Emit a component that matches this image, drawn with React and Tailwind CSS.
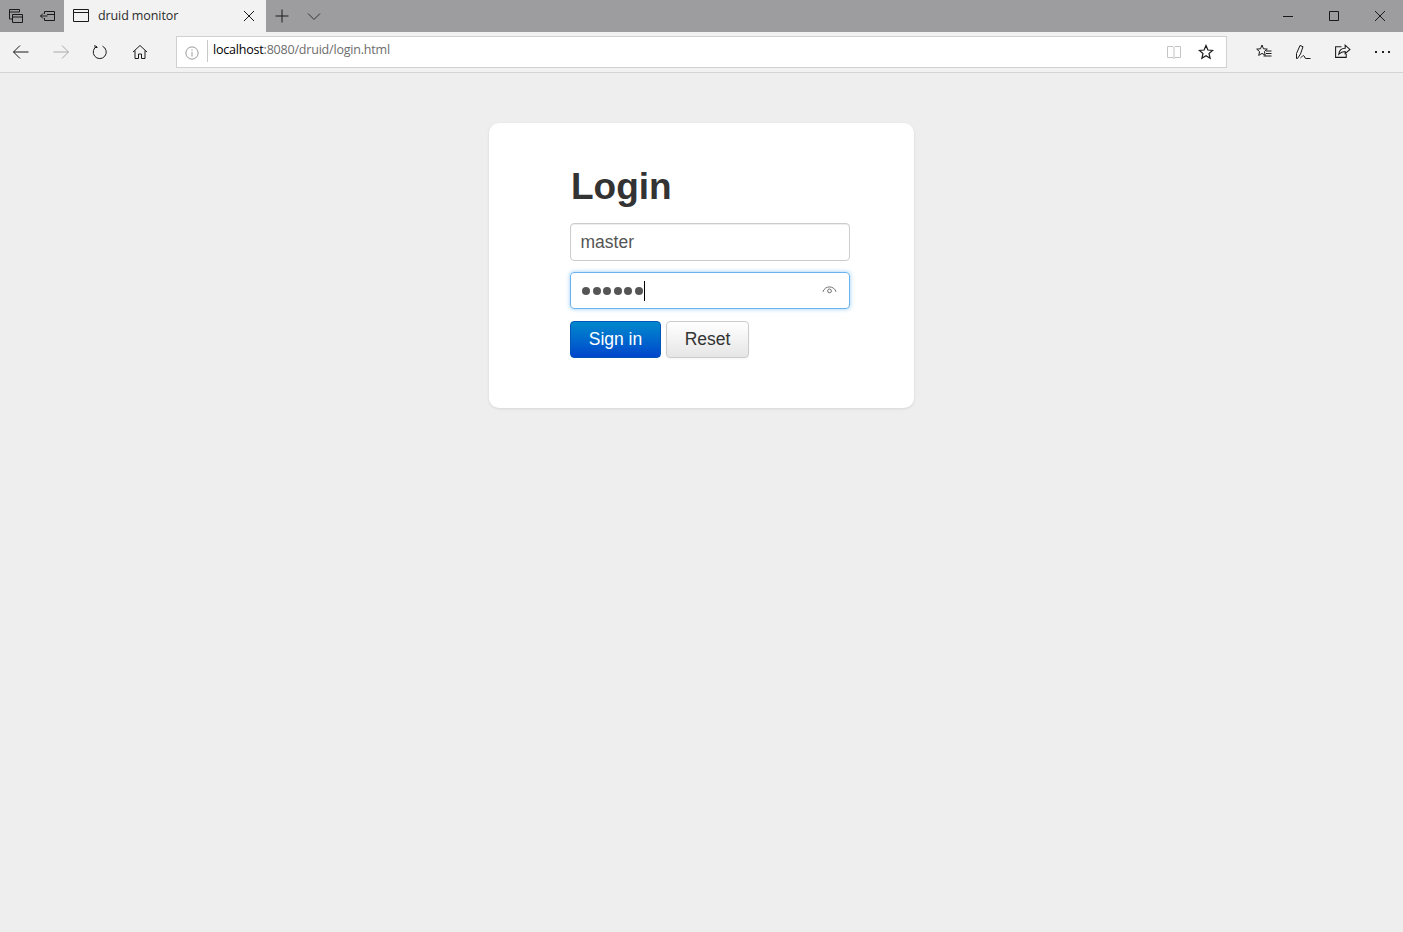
import React from 'react';

const Icon = ({ className = '', size = 16, children, stroke = '#1a1a1a' }) => (
  <svg width={size} height={size} viewBox="0 0 16 16" fill="none" stroke={stroke} strokeWidth="1" className={className}>
    {children}
  </svg>
);

function TitleBar() {
  return (
    <div className="flex h-8 items-stretch bg-[#9d9d9f]">
      <div className="flex w-8 items-center justify-center">
        <Icon>
          <path d="M1.500 1.500h10v2.500h-10zM1.500 4v7h2.500M4.500 6.500h10v8h-10zM4.500 9h10" />
        </Icon>
      </div>
      <div className="flex w-8 items-center justify-center">
        <Icon>
          <path d="M4.500 3.500h10v9h-10v-2.500M4.500 6V3.500M.5 8h7M3 5.500L.5 8 3 10.500M7 6.500h7.500" />
        </Icon>
      </div>
      <div className="flex w-[202px] items-center bg-[#f2f2f2] px-[9px]">
        <Icon>
          <path d="M.5 1.500h15v12h-15zM.5 4.500h15" />
        </Icon>
        <span className="ml-[9px] flex-1 text-[12.5px] tracking-[-0.1px] text-[#2b2b2b] font-['Open_Sans',sans-serif]">druid monitor</span>
        <Icon>
          <path d="M3 3l10 10M13 3L3 13" />
        </Icon>
      </div>
      <div className="flex w-8 items-center justify-center">
        <Icon>
          <path d="M8 1.500v13M1.500 8h13" />
        </Icon>
      </div>
      <div className="flex w-8 items-center justify-center">
        <Icon stroke="#333">
          <path d="M2 5.500l6 6 6-6" />
        </Icon>
      </div>
      <div className="flex-1" />
      <div className="flex w-[46px] items-center justify-center">
        <Icon><path d="M3 8.500h10" /></Icon>
      </div>
      <div className="flex w-[46px] items-center justify-center">
        <Icon><path d="M3.500 3.500h9v9h-9z" /></Icon>
      </div>
      <div className="flex w-[46px] items-center justify-center">
        <Icon><path d="M3 3l10 10M13 3L3 13" /></Icon>
      </div>
    </div>
  );
}

function ToolBar() {
  return (
    <div className="flex h-[41px] items-center border-b border-[#d4d4d4] bg-[#f2f2f2] pb-px">
      <div className="flex w-10 items-center justify-center pl-px">
        <Icon>
          <path d="M.5 8h15M7 1.500L.5 8 7 14.500" />
        </Icon>
      </div>
      <div className="flex w-10 items-center justify-center pl-px">
        <Icon stroke="#a8a8a8">
          <path d="M15.500 8H.5M9 1.500L15.500 8 9 14.500" />
        </Icon>
      </div>
      <div className="flex w-10 items-center justify-center">
        <Icon>
          <path d="M5 2.200A6.500 6.500 0 1 0 10.500 2.200M3 1v2.500h2.500" />
        </Icon>
      </div>
      <div className="flex w-10 items-center justify-center">
        <Icon>
          <path d="M1 8L8 1.500 15 8M3 6.500v8h3.500V10h3v4.500H13v-8" />
        </Icon>
      </div>
      <div className="ml-4 flex h-8 w-[1051px] items-center border border-[#d0d0d0] bg-white">
        <div className="flex w-[30px] items-center justify-center pt-[2px]">
          <Icon size={14} stroke="#8a8a8a">
            <circle cx="8" cy="8" r="7" />
            <path d="M8 7v5M8 4v1.500" />
          </Icon>
        </div>
        <div className="mt-[3px] h-[22px] w-px self-start bg-[#c8c8c8]" />
        <div className="ml-[5px] flex-1 self-start pt-[3px] text-[12.5px] leading-[20px] tracking-[-0.2px] font-['Open_Sans',sans-serif] text-[#6d6d6d]">
          <span className="text-black">localhost</span>:8080/druid/login.html
        </div>
        <div className="mr-[16px] pt-px">
          <Icon stroke="#c4c4c4">
            <path d="M1.500 2.500h5.500L8 3.500l1-1h5.500v11H9L8 14.500l-1-1H1.500zM8 3.500v11" />
          </Icon>
        </div>
        <div className="mr-[12px]">
          <Icon>
            <path d="M8 1.500l1.900 4.500 4.800.4-3.700 3.100 1.100 4.800L8 11.800l-4.100 2.500 1.100-4.800-3.700-3.100 4.800-.4z" strokeWidth="1.200" />
          </Icon>
        </div>
      </div>
      <div className="ml-[27px] flex w-5 justify-center">
        <Icon>
          <path d="M6 1l1.500 3.800 3.800.3-2.900 2.400.9 3.800L6 9.400l-3.300 2 .9-3.800L.7 5.100l3.800-.3zM10 7h5.500M10 9.500h5.500M7.500 12h8" />
        </Icon>
      </div>
      <div className="ml-[19px] flex w-5 justify-center">
        <Icon>
          <path d="M1.500 14.500V9.500L5 1.500l3 1.200L5.500 10l-3 4.500zM5.500 14c1.500-1 2-2.500 3-2.500s1 3 2.500 3h4.500" />
        </Icon>
      </div>
      <div className="ml-[19px] flex w-5 justify-center">
        <Icon size={17}>
          <path d="M7 3.500H1.500v10h10V10M4.500 10.500c.5-3.500 3-5.500 6-5.500V2l4.500 4-4.500 4V8c-2.500 0-4.500 1-6 2.500z" />
        </Icon>
      </div>
      <div className="ml-[23px] flex items-center gap-[4.500px]">
        <span className="h-[2px] w-[2px] bg-[#222]" />
        <span className="h-[2px] w-[2px] bg-[#222]" />
        <span className="h-[2px] w-[2px] bg-[#222]" />
      </div>
    </div>
  );
}

function LoginCard() {
  return (
    <div className="mx-auto mt-[50px] h-[285px] w-[425px] rounded-[10px] bg-white pl-[81px] pt-[39px] shadow-[0_1px_3px_rgba(0,0,0,0.1)] font-['Liberation_Sans',sans-serif]">
      <h2 className="mb-[11px] h-[50px] pl-px text-[37px] font-bold leading-[50px] text-[#333]">Login</h2>
      <input
        readOnly
        value="master"
        className="block h-[38px] w-[280px] rounded-[4px] border border-[#ccc] px-[9.500px] text-[17.500px] text-[#555] shadow-[inset_0_1px_1px_rgba(0,0,0,0.075)] outline-none"
      />
      <div className="mt-[11px] flex h-[37px] w-[280px] items-center rounded-[4px] border border-[#69b4f0] pl-[11px] pr-[9px] shadow-[0_0_4px_rgba(82,168,236,0.6)]">
        <div className="flex gap-[2.600px]">
          {[0, 1, 2, 3, 4, 5].map((i) => (
            <span key={i} className="h-2 w-2 rounded-full bg-[#555]" />
          ))}
        </div>
        <span className="ml-px h-5 w-px bg-black" />
        <div className="mb-[2px] ml-auto mr-[3px]">
          <Icon size={15} stroke="#666">
            <path d="M1 10.500C3 3.500 13 3.500 15 10.500" />
            <circle cx="8" cy="9.500" r="2" />
          </Icon>
        </div>
      </div>
      <div className="mt-[12px] flex gap-[5px]">
        <button className="h-[37px] w-[91px] rounded-[4px] border border-[#0055b8] bg-gradient-to-b from-[#0088cc] to-[#0044cc] text-[17.500px] text-white">
          Sign in
        </button>
        <button className="h-[37px] w-[83px] rounded-[4px] border border-[#ccc] bg-gradient-to-b from-white to-[#e6e6e6] text-[17.500px] text-[#333] shadow-[0_1px_2px_rgba(0,0,0,0.05)]">
          Reset
        </button>
      </div>
    </div>
  );
}

export default function App() {
  return (
    <div className="min-h-[932px] bg-[#eeeeee]">
      <TitleBar />
      <ToolBar />
      <LoginCard />
    </div>
  );
}
